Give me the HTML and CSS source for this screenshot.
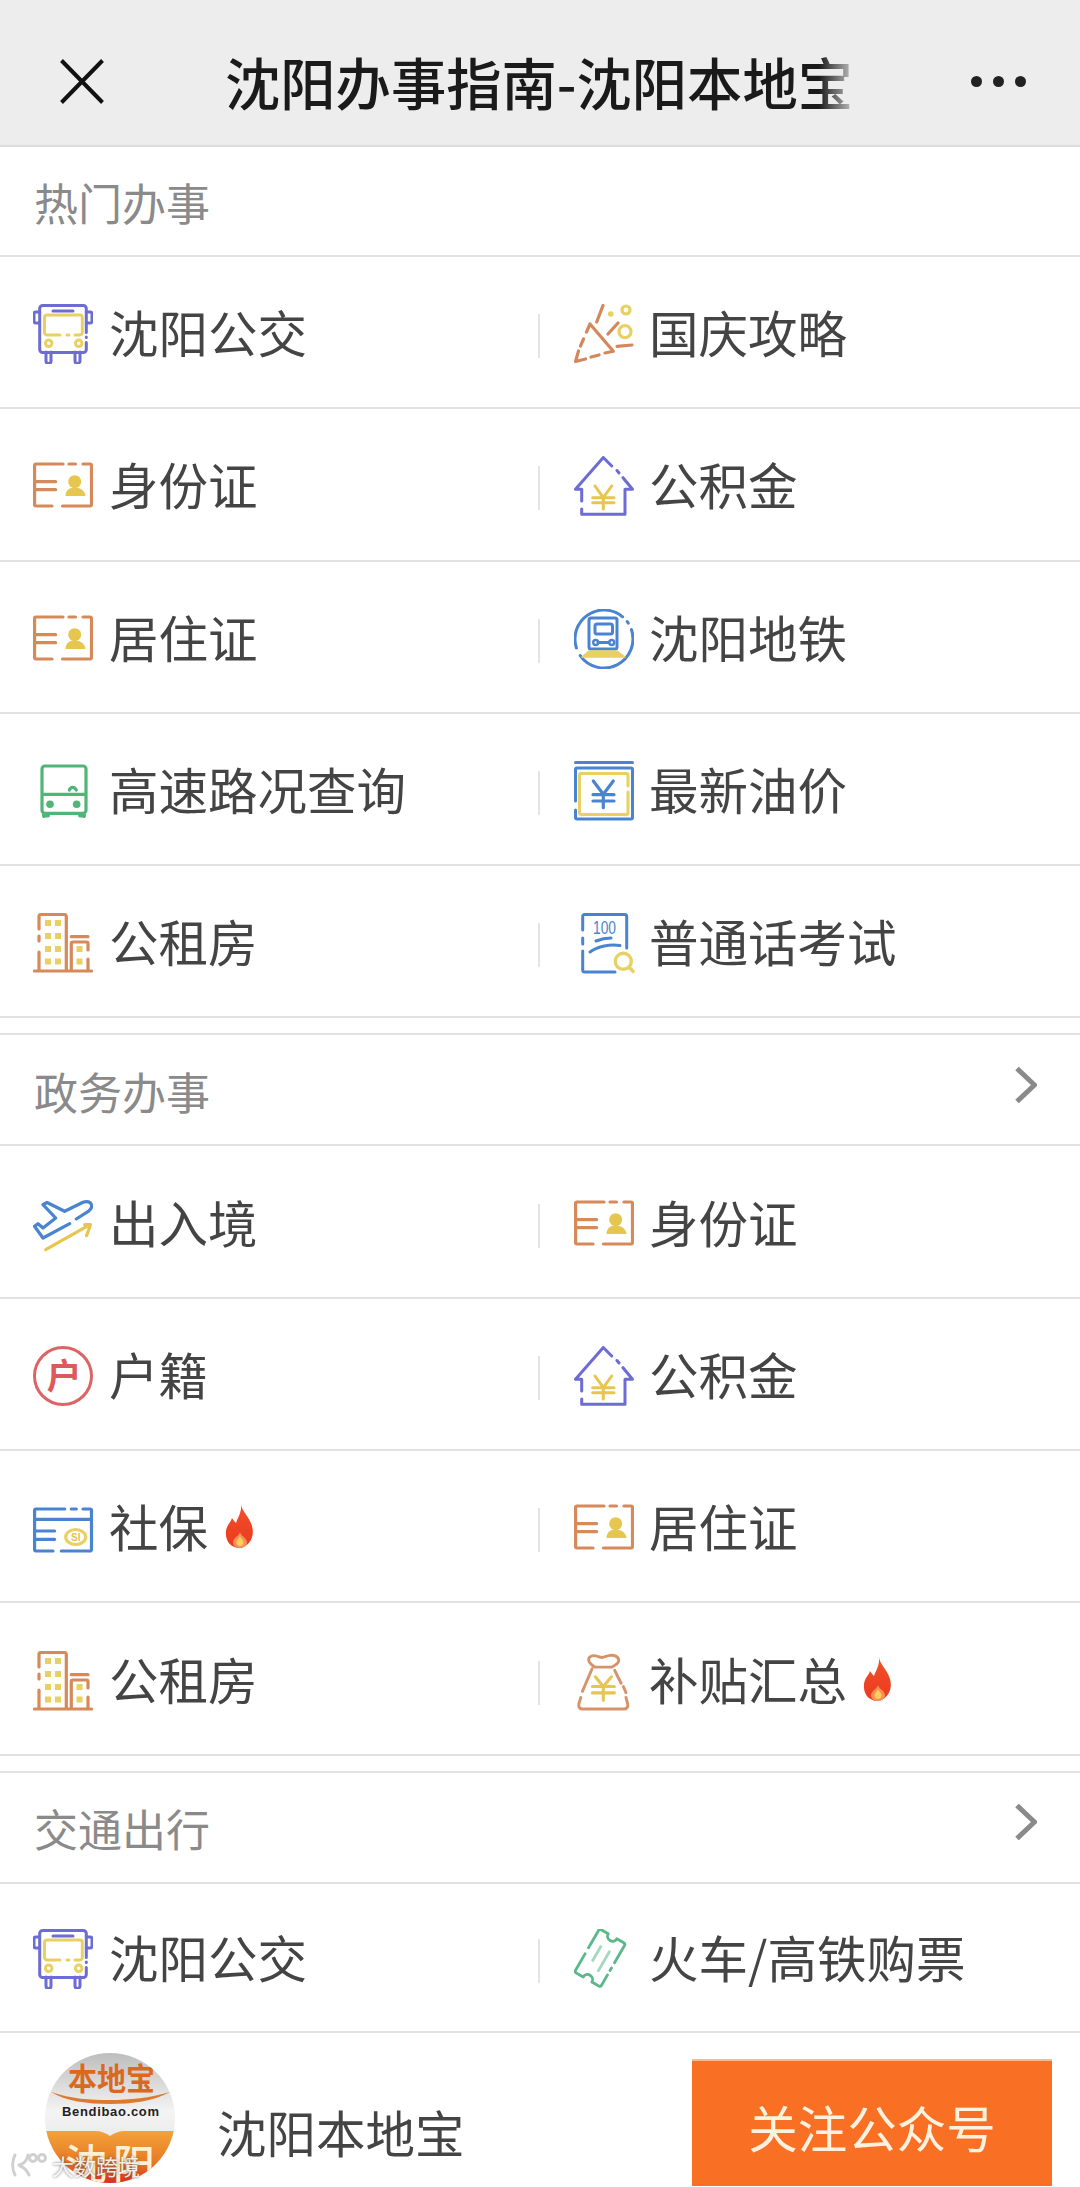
FILE: index.html
```html
<!DOCTYPE html>
<html lang="zh-CN">
<head>
<meta charset="utf-8">
<title>沈阳办事指南-沈阳本地宝</title>
<link rel="stylesheet" href="styles.css">
</head>
<body>
<svg class="sprite" xmlns="http://www.w3.org/2000/svg" aria-hidden="true">
  <defs>
    <linearGradient id="flameG" x1="0" y1="0" x2="0" y2="1"><stop offset="0" stop-color="#f0502a"/><stop offset="1" stop-color="#ec3a1e"/></linearGradient>
    <linearGradient id="logoTop" x1="0" y1="0" x2="0" y2="1"><stop offset="0" stop-color="#bdbdbd"/><stop offset=".45" stop-color="#f4f4f4"/><stop offset=".6" stop-color="#ededed"/><stop offset="1" stop-color="#cfcfcf"/></linearGradient>
    <linearGradient id="logoBot" x1="0" y1="0" x2="0" y2="1"><stop offset="0" stop-color="#f2a23c"/><stop offset=".6" stop-color="#e87a22"/><stop offset="1" stop-color="#d8301e"/></linearGradient>
    <clipPath id="logoClip"><circle cx="65" cy="65" r="65"/></clipPath>
  </defs>
  <symbol id="i-bus" viewBox="0 0 60 60"><g fill="none" stroke-width="3" stroke-linecap="round" stroke-linejoin="round">
    <path stroke="#6d6cd2" d="M53.300 27V3a3 3 0 0 0-3-3H9.700a3 3 0 0 0-3 3v41a3 3 0 0 0 3 3h40.600a3 3 0 0 0 3-3v-7M53.300 31.500v.5" transform="translate(0 1.500)"/>
    <path stroke="#6d6cd2" d="M6.700 8H3a2 2 0 0 0-2 2v7a2 2 0 0 0 2 2h3.700M53.300 8H57a2 2 0 0 1 2 2v7a2 2 0 0 1-2 2h-3.700M20 7h20M13 48v9a2.500 2.500 0 0 0 5 0V48M42 48v9a2.500 2.500 0 0 0 5 0V48"/>
    <path stroke="#e8d063" d="M27 31H14a2.500 2.500 0 0 1-2.500-2.500V13.500A2.500 2.500 0 0 1 14 11h32.800a2.500 2.500 0 0 1 2.500 2.500V28.500a2.500 2.500 0 0 1-2.500 2.500H42M34 31h2"/>
    <circle stroke="#e8d063" cx="15.700" cy="39.300" r="3.300"/><circle stroke="#e8d063" cx="45.700" cy="39.300" r="3.300"/>
  </g></symbol>
  <symbol id="i-party" viewBox="0 0 60 60"><g fill="none" stroke-width="3.200" stroke-linecap="round" stroke-linejoin="round">
    <path stroke="#d4875a" d="M16 20l23.300 27.300M16 20l-3.500 8M9.500 35l-3 7M4.500 47L1.500 57.500l10-2.500M17 53l8-2M31 49l8.300-1.700M29 1.500l-6.300 16.500M34 30l10-11M43 42.300L58 41"/>
    <circle cx="36.700" cy="10" r="2.800" fill="#e8d063"/>
    <circle stroke="#e8d063" cx="52" cy="6" r="4"/><circle stroke="#e8d063" cx="51" cy="27.700" r="6"/>
  </g></symbol>
  <symbol id="i-id" viewBox="0 0 60 60"><g fill="none" stroke="#d68a5c" stroke-width="3.200" stroke-linecap="round" stroke-linejoin="round">
    <path d="M30 8H3A1.500 1.500 0 0 0 1.600 9.500v39A1.500 1.500 0 0 0 3 50H19M29.500 50H57a1.500 1.500 0 0 0 1.500-1.500v-39A1.500 1.500 0 0 0 57 8H50M36 8h6.500M1.600 25.700h21M1.600 33.700h21"/>
    <circle cx="41.700" cy="25.700" r="6.500" fill="#e6c64f" stroke="none"/>
    <path d="M32.500 40c0-5 3-7.500 6-8h6.500c3 .5 7 3 7.500 8z" fill="#e6c64f" stroke="none"/>
  </g></symbol>
  <symbol id="i-house" viewBox="0 0 60 60"><g fill="none" stroke-width="3" stroke-linecap="round" stroke-linejoin="round">
    <path stroke="#6d6cd2" d="M37.700 10L29.300 1.500 1.500 33.300h6.200V45M7.700 53v5.300H51V33.300h7.500L49 21.700M43 14.500l2 2.500"/>
    <path stroke="#e6c64f" d="M21 30l8.300 11.700L37.700 30M29.300 41.700V53M18.700 41.700H40M18.700 46.700H40"/>
  </g></symbol>
  <symbol id="i-metro" viewBox="0 0 60 60"><g fill="none" stroke-width="3" stroke-linecap="round" stroke-linejoin="round">
    <path stroke="#4a84d0" d="M48.600 7.800A29 29 0 0 0 2.400 39M6.200 46.600A29 29 0 0 0 57.400 20.600M54.300 14.200L53.200 12.500"/>
    <path stroke="#4a84d0" d="M17 9h24a2 2 0 0 1 2 2v27a2 2 0 0 1-2 2H17a2 2 0 0 1-2-2V11a2 2 0 0 1 2-2zM23 15h13.500a2 2 0 0 1 2 2v6a2 2 0 0 1-2 2H23a2 2 0 0 1-2-2v-6a2 2 0 0 1 2-2zM24 33.500h11"/>
    <circle stroke="#4a84d0" stroke-width="2.400" cx="21.700" cy="33.500" r="2.500"/><circle stroke="#4a84d0" stroke-width="2.400" cx="37.700" cy="33.500" r="2.500"/>
    <path fill="#e8d063" stroke="#e8d063" stroke-width="1.500" d="M15 42h28l8 6H8z"/>
  </g></symbol>
  <symbol id="i-road" viewBox="0 0 60 60"><g fill="none" stroke="#52b477" stroke-width="3.200" stroke-linecap="round" stroke-linejoin="round">
    <path d="M12 5h38a3 3 0 0 1 3 3v41.300a3 3 0 0 1-3 3H12a3 3 0 0 1-3-3V8a3 3 0 0 1 3-3zM9.500 33.300h43M36.300 29c1.500-3.500 5-3.500 7 0M11 52.500v3M51 52.500v3"/>
    <path stroke-width="4" d="M11 54.500h4M47 54.500h4"/>
    <circle cx="17" cy="43.300" r="3.800" fill="#52b477" stroke="none"/><circle cx="43.700" cy="43.300" r="3.800" fill="#52b477" stroke="none"/>
  </g></symbol>
  <symbol id="i-oil" viewBox="0 0 60 60"><g fill="none" stroke-width="3" stroke-linecap="round" stroke-linejoin="round">
    <path stroke="#4a84d0" d="M1.500 1.500h57M1.500 40V8.500A1.500 1.500 0 0 1 3 7h54a1.500 1.500 0 0 1 1.500 1.500V56.500A1.500 1.500 0 0 1 57 58H3a1.500 1.500 0 0 1-1.500-1.500V49"/>
    <path stroke="#e8d063" d="M54 25V14a1.500 1.500 0 0 0-1.500-1.500H7A1.500 1.500 0 0 0 5.500 14v38A1.500 1.500 0 0 0 7 53.500h45.500A1.500 1.500 0 0 0 54 52V31"/>
    <path stroke="#4a84d0" stroke-width="3.200" d="M19.300 20l10 13.300 10-13.300M29.300 33.300v13.400M19 33.700h21M19 40h21"/>
  </g></symbol>
  <symbol id="i-flat" viewBox="0 0 60 60"><g fill="none" stroke="#d68a5c" stroke-width="3.200" stroke-linecap="round" stroke-linejoin="round">
    <path d="M1.500 58h57M6 58V39M6 28v-5M6 16V3.500a2 2 0 0 1 2-2h23a2 2 0 0 1 2.300 2V58M38.300 23.700H55M38.300 58V30.500a1.500 1.500 0 0 1 1.500-1.500H53.500a1.500 1.500 0 0 1 1.500 1.500V37M55 46v12"/>
    <g fill="#e8d063" stroke="none">
      <rect x="12" y="7" width="6" height="6"/><rect x="22" y="7" width="6" height="6"/>
      <rect x="12" y="20" width="6" height="6"/><rect x="22" y="20" width="6" height="6"/>
      <rect x="12" y="33" width="6" height="6"/><rect x="22" y="33" width="6" height="6"/>
      <rect x="12" y="45.500" width="6" height="6"/><rect x="22" y="45.500" width="6" height="6"/>
      <rect x="43.500" y="33" width="6" height="6"/><rect x="43.500" y="45.500" width="6" height="6"/>
    </g>
  </g></symbol>
  <symbol id="i-plane" viewBox="0 0 60 60"><g fill="none" stroke-width="3.200" stroke-linecap="round" stroke-linejoin="round">
    <path stroke="#4a84d0" d="M36.700 29.700L10 44 1.500 32.300 5 29.700l5 4.300 12.700-10L10 10.700l4-2.200 17.700 8.800L50 8.300c4-1.500 8-.5 8.500 2.500.6 2.500-.5 4.500-2.500 6L43.300 25"/>
    <path stroke="#e6c64f" d="M12.700 55.700L57 30.700M51.700 30.700H57.500l-4 11"/>
  </g></symbol>
  <symbol id="i-bag" viewBox="0 0 60 62"><g fill="none" stroke="#d8926a" stroke-width="3" stroke-linecap="round" stroke-linejoin="round">
    <path d="M21 16.700h16.700c3-1.500 7.800-3.700 7.600-7-.3-4.500-5.300-5.700-9-5.200-3.300.5-5.800 2-8.600 2.200-3-.3-6.500-2.700-10-1.700-3 .8-4 3-3.400 5 .8 3 4 5.200 6.700 6.700zM17.700 18.300L7.700 41.700M41 20l6.700 13.300M50 36.700l2.700 6.300M6 48L4 55c-.5 3 1 5 4 5h42.500c3 0 4.500-2 4-5l-1.800-7"/>
    <path stroke="#e6c64f" stroke-width="3.200" d="M21 26.700l8.300 10 8.400-10M29.300 36.700V51M18 36.700h22.700M18 43.300h22.700"/>
  </g></symbol>
  <symbol id="i-ticket" viewBox="0 0 60 60"><g fill="none" stroke="#5cb88a" stroke-width="2.800" stroke-linecap="round" stroke-linejoin="round" transform="rotate(30 30 30) translate(0 1)">
    <path d="M13 5h8a5 5 0 0 0 10 0h8a2 2 0 0 1 2 2v20M41 33v3M41 41v12a2 2 0 0 1-2 2h-8a5 5 0 0 0-10 0h-8a2 2 0 0 1-2-2V34M11 27v-20a2 2 0 0 1 2-2"/>
    <path stroke="#a5d8bf" d="M21 20v16M31 20v22"/>
  </g></symbol>
  <symbol id="i-flame" viewBox="0 0 30 44">
    <path fill="url(#flameG)" d="M16 0c1 8 8 12 11 22 3 10-2 20-12 22C5 44 0 36 1 27c.7-6 5-9 6-13 2 3 3 4 4 5 2-6 6-11 5-19z"/>
    <path fill="#f6905a" d="M15 28c1 4 7 6 7 10.500 0 3.500-3.500 5.500-7 5.500s-7-2-7-5.500C8 34 14 32 15 28z"/>
    <path fill="#fbcf5a" d="M15 32c.8 2.500 3.500 4 3.500 6.500 0 2.500-2 3.500-3.500 3.500s-3.500-1-3.500-3.500C11.500 36 14.200 34.500 15 32z"/>
  </symbol>
</svg>

<div class="app">
  <header class="topbar">
    <svg class="close" viewBox="0 0 44 45"><path d="M1.500 1.500l41 42M42.500 1.500l-41 42"/></svg>
    <h1 class="title">沈阳办事指南-沈阳本地宝</h1>
    <div class="dots"><i></i><i></i><i></i></div>
  </header>

  <section class="group">
    <div class="head"><span>热门办事</span></div>
    <div class="row"><a class="cell"><svg class="ic"><use href="#i-bus"/></svg>沈阳公交</a><a class="cell cell-r"><svg class="ic"><use href="#i-party"/></svg>国庆攻略</a></div>
    <div class="row"><a class="cell"><svg class="ic"><use href="#i-id"/></svg>身份证</a><a class="cell cell-r"><svg class="ic"><use href="#i-house"/></svg>公积金</a></div>
    <div class="row"><a class="cell"><svg class="ic"><use href="#i-id"/></svg>居住证</a><a class="cell cell-r"><svg class="ic"><use href="#i-metro"/></svg>沈阳地铁</a></div>
    <div class="row"><a class="cell"><svg class="ic"><use href="#i-road"/></svg>高速路况查询</a><a class="cell cell-r"><svg class="ic"><use href="#i-oil"/></svg>最新油价</a></div>
    <div class="row"><a class="cell"><svg class="ic"><use href="#i-flat"/></svg>公租房</a><a class="cell cell-r"><svg class="ic" viewBox="0 0 60 60"><g fill="none" stroke-width="3" stroke-linecap="round" stroke-linejoin="round">
      <path stroke="#4a84d0" d="M8.700 17V3.500a2 2 0 0 1 2-2h40a2 2 0 0 1 2 2V35M8.700 25v6M8.700 38v19a2 2 0 0 0 2 2H41M16 39c8-6 20-8 30-6.500M22 28c5-2 10-3 15-3"/>
      <text class="ic-num" x="30.500" y="21" text-anchor="middle" textLength="23" lengthAdjust="spacingAndGlyphs">100</text>
      <circle stroke="#e8d063" stroke-width="3.400" cx="49.300" cy="48.300" r="8"/><path stroke="#e8d063" stroke-width="3.400" d="M55 54l4 4.500"/>
    </g></svg>普通话考试</a></div>
  </section>

  <section class="group group-next">
    <div class="head"><span>政务办事</span><svg class="chev" viewBox="0 0 22 36"><path d="M2 1.500L19.500 18 2 34.500"/></svg></div>
    <div class="row"><a class="cell"><svg class="ic"><use href="#i-plane"/></svg>出入境</a><a class="cell cell-r"><svg class="ic"><use href="#i-id"/></svg>身份证</a></div>
    <div class="row"><a class="cell"><svg class="ic" viewBox="0 0 60 60">
      <circle cx="30" cy="30" r="28.500" fill="none" stroke="#dc6464" stroke-width="3"/>
      <text class="ic-hu" x="31" y="43" text-anchor="middle">户</text>
    </svg>户籍</a><a class="cell cell-r"><svg class="ic"><use href="#i-house"/></svg>公积金</a></div>
    <div class="row"><a class="cell"><svg class="ic" viewBox="0 0 60 60"><g fill="none" stroke="#4a84d0" stroke-width="3.200" stroke-linecap="round" stroke-linejoin="round">
      <path d="M31.700 11H3A1.500 1.500 0 0 0 1.600 12.500v39A1.500 1.500 0 0 0 3 53H20M28.300 53H57a1.500 1.500 0 0 0 1.500-1.500v-39A1.500 1.500 0 0 0 57 11H50M38.300 11h5M1.600 21.300h57M1.600 33h20M1.600 41.300h20"/>
      <ellipse cx="42.700" cy="39" rx="10" ry="7.500" stroke="#e8d063"/>
      <text class="ic-si" x="42.700" y="43" text-anchor="middle">SI</text>
    </g></svg>社保<svg class="flame"><use href="#i-flame"/></svg></a><a class="cell cell-r"><svg class="ic"><use href="#i-id"/></svg>居住证</a></div>
    <div class="row"><a class="cell"><svg class="ic"><use href="#i-flat"/></svg>公租房</a><a class="cell cell-r"><svg class="ic"><use href="#i-bag"/></svg>补贴汇总<svg class="flame"><use href="#i-flame"/></svg></a></div>
  </section>

  <section class="group group-next">
    <div class="head"><span>交通出行</span><svg class="chev" viewBox="0 0 22 36"><path d="M2 1.500L19.500 18 2 34.500"/></svg></div>
    <div class="row row-last"><a class="cell"><svg class="ic"><use href="#i-bus"/></svg>沈阳公交</a><a class="cell cell-r"><svg class="ic"><use href="#i-ticket"/></svg>火车/高铁购票</a></div>
  </section>

  <footer class="foot">
    <svg class="logo" viewBox="0 0 130 130">
      <g clip-path="url(#logoClip)">
        <rect width="130" height="130" fill="url(#logoTop)"/>
        <text class="logo-cn" x="23" y="37" textLength="87" lengthAdjust="spacingAndGlyphs">本地宝</text>
        <path fill="#dd7a30" d="M6 39c20 7 40 8 59 8s40-2 60-8c-16 9-38 12-60 12S20 48 6 39z"/>
        <text class="logo-en" x="17" y="63" textLength="97">Bendibao.com</text>
        <path fill="url(#logoBot)" d="M0 78h50c6 0 11 2 15 5 4-3 9-5 15-5h50v52H0z"/>
        <text class="logo-city" x="20" y="127" textLength="90">沈阳</text>
      </g>
    </svg>
    <div class="name">沈阳本地宝</div>
    <a class="follow">关注公众号</a>
    <div class="watermark">
      <svg class="wm-logo" viewBox="0 0 38 26"><path d="M5 3c-3 6-3 14 0 20M9 13c5-1 8-5 9-10M10 14c4 1 7 5 9 9"/><circle cx="23" cy="6" r="3.500"/><circle cx="32" cy="6" r="3.500"/></svg>
      <span>大数跨境</span>
    </div>
  </footer>
</div>
</body>
</html>
```
FILE: styles.css
```css
* { box-sizing: border-box; }
html, body { margin: 0; padding: 0; }
body {
  width: 1080px;
  height: 2187px;
  overflow: hidden;
  background: #fff;
  font-family: "Noto Sans CJK SC", "Noto Sans", sans-serif;
  color: #444;
}
.sprite { position: absolute; width: 0; height: 0; overflow: hidden; }
.app { display: flex; flex-direction: column; height: 2187px; }

.topbar {
  height: 147px;
  flex: none;
  display: flex;
  align-items: center;
  background: #ededed;
  border-bottom: 2px solid #dcdcdc;
  padding: 17px 0 0 60px;
}
.close { width: 44px; height: 45px; flex: none; }
.close path { fill: none; stroke: #111; stroke-width: 4; }
.title {
  margin: 0 0 0 121px;
  width: 640px;
  flex: none;
  font-size: 55.3px;
  font-weight: 500;
  line-height: 60px;
  color: #1a1a1a;
  white-space: nowrap;
  -webkit-mask-image: linear-gradient(to right, #000 594px, rgba(0,0,0,.25) 626px);
  mask-image: linear-gradient(to right, #000 594px, rgba(0,0,0,.25) 626px);
}
.dots { margin-left: 106px; display: flex; gap: 11px; }
.dots i { width: 11px; height: 11px; border-radius: 50%; background: #222; }

.group { flex: none; }
.group-next { margin-top: 15px; border-top: 2px solid #e2e2e2; }

.head {
  height: 110px;
  display: flex;
  align-items: center;
  justify-content: space-between;
  padding: 0 43px 0 34px;
  font-size: 44px;
  line-height: 60px;
  color: #8a8a8a;
  border-bottom: 2.500px solid #e2e2e2;
}
.head span { position: relative; top: 1px; }
.group-next .head { height: 111px; }
.chev { width: 22px; height: 36px; margin-bottom: 10px; }
.chev path { fill: none; stroke: #8a8a8a; stroke-width: 5; }

.row {
  height: 152.300px;
  display: grid;
  grid-template-columns: 538px 1fr;
  border-bottom: 2.500px solid #e2e2e2;
}
.row-last { height: 149px; }
.cell {
  display: flex;
  align-items: center;
  gap: 16px;
  padding-left: 33px;
  font-size: 49.500px;
  line-height: 60px;
  color: #444;
  white-space: nowrap;
}
.cell-r { padding-left: 0; gap: 15px; }
.cell-r::before {
  content: "";
  width: 2px;
  height: 44px;
  margin: 8px 19px 0 0;
  background: #e4e4e4;
}
.ic { width: 60px; height: 60px; flex: none; overflow: visible; margin-top: 4px; }
.flame { width: 30px; height: 44px; flex: none; }
.cell .flame { margin-left: 1px; }

.ic-num { font-family: "Liberation Sans", sans-serif; font-size: 18px; fill: #4a84d0; stroke: none; }
.ic-hu { font-family: "Noto Sans CJK SC", sans-serif; font-weight: 700; font-size: 35px; fill: #dc5a5a; }
.ic-si { font-family: "Liberation Sans", sans-serif; font-size: 10px; font-weight: 700; fill: #e0c54e; stroke: none; }

.foot {
  position: relative;
  flex: 1;
  display: flex;
  align-items: flex-start;
  padding: 20px 28px 0 45px;
  overflow: hidden;
}
.logo { width: 130px; height: 130px; flex: none; }
.logo-cn { font-family: "Noto Sans CJK SC", sans-serif; font-weight: 700; font-size: 31px; fill: #d9691f; }
.logo-en { font-family: "Liberation Sans", sans-serif; font-weight: 700; font-size: 13px; fill: #222; }
.logo-city { font-family: "Noto Sans CJK SC", sans-serif; font-weight: 500; font-size: 42px; fill: #fff0d6; }
.name { margin: 49px 0 0 42px; font-size: 49.500px; line-height: 60px; color: #444; white-space: nowrap; }
.follow {
  margin: 6px 0 0 auto;
  width: 360px;
  height: 127px;
  flex: none;
  display: flex;
  align-items: center;
  justify-content: center;
  padding-top: 8px;
  background: #f96f23;
  border-top: 2px solid #fbb98a;
  font-size: 49.500px;
  line-height: 60px;
  color: #fdf1e0;
}
.watermark {
  position: absolute;
  left: 10px;
  top: 118px;
  display: flex;
  align-items: center;
  gap: 4px;
  font-size: 22px;
  line-height: 28px;
  color: rgba(255,255,255,.9);
  text-shadow: 0 0 3px rgba(70,70,70,.8);
}
.wm-logo { width: 38px; height: 26px; flex: none; }
.wm-logo path, .wm-logo circle { fill: none; stroke: #d0d0d0; stroke-width: 3; stroke-linecap: round; }
```
